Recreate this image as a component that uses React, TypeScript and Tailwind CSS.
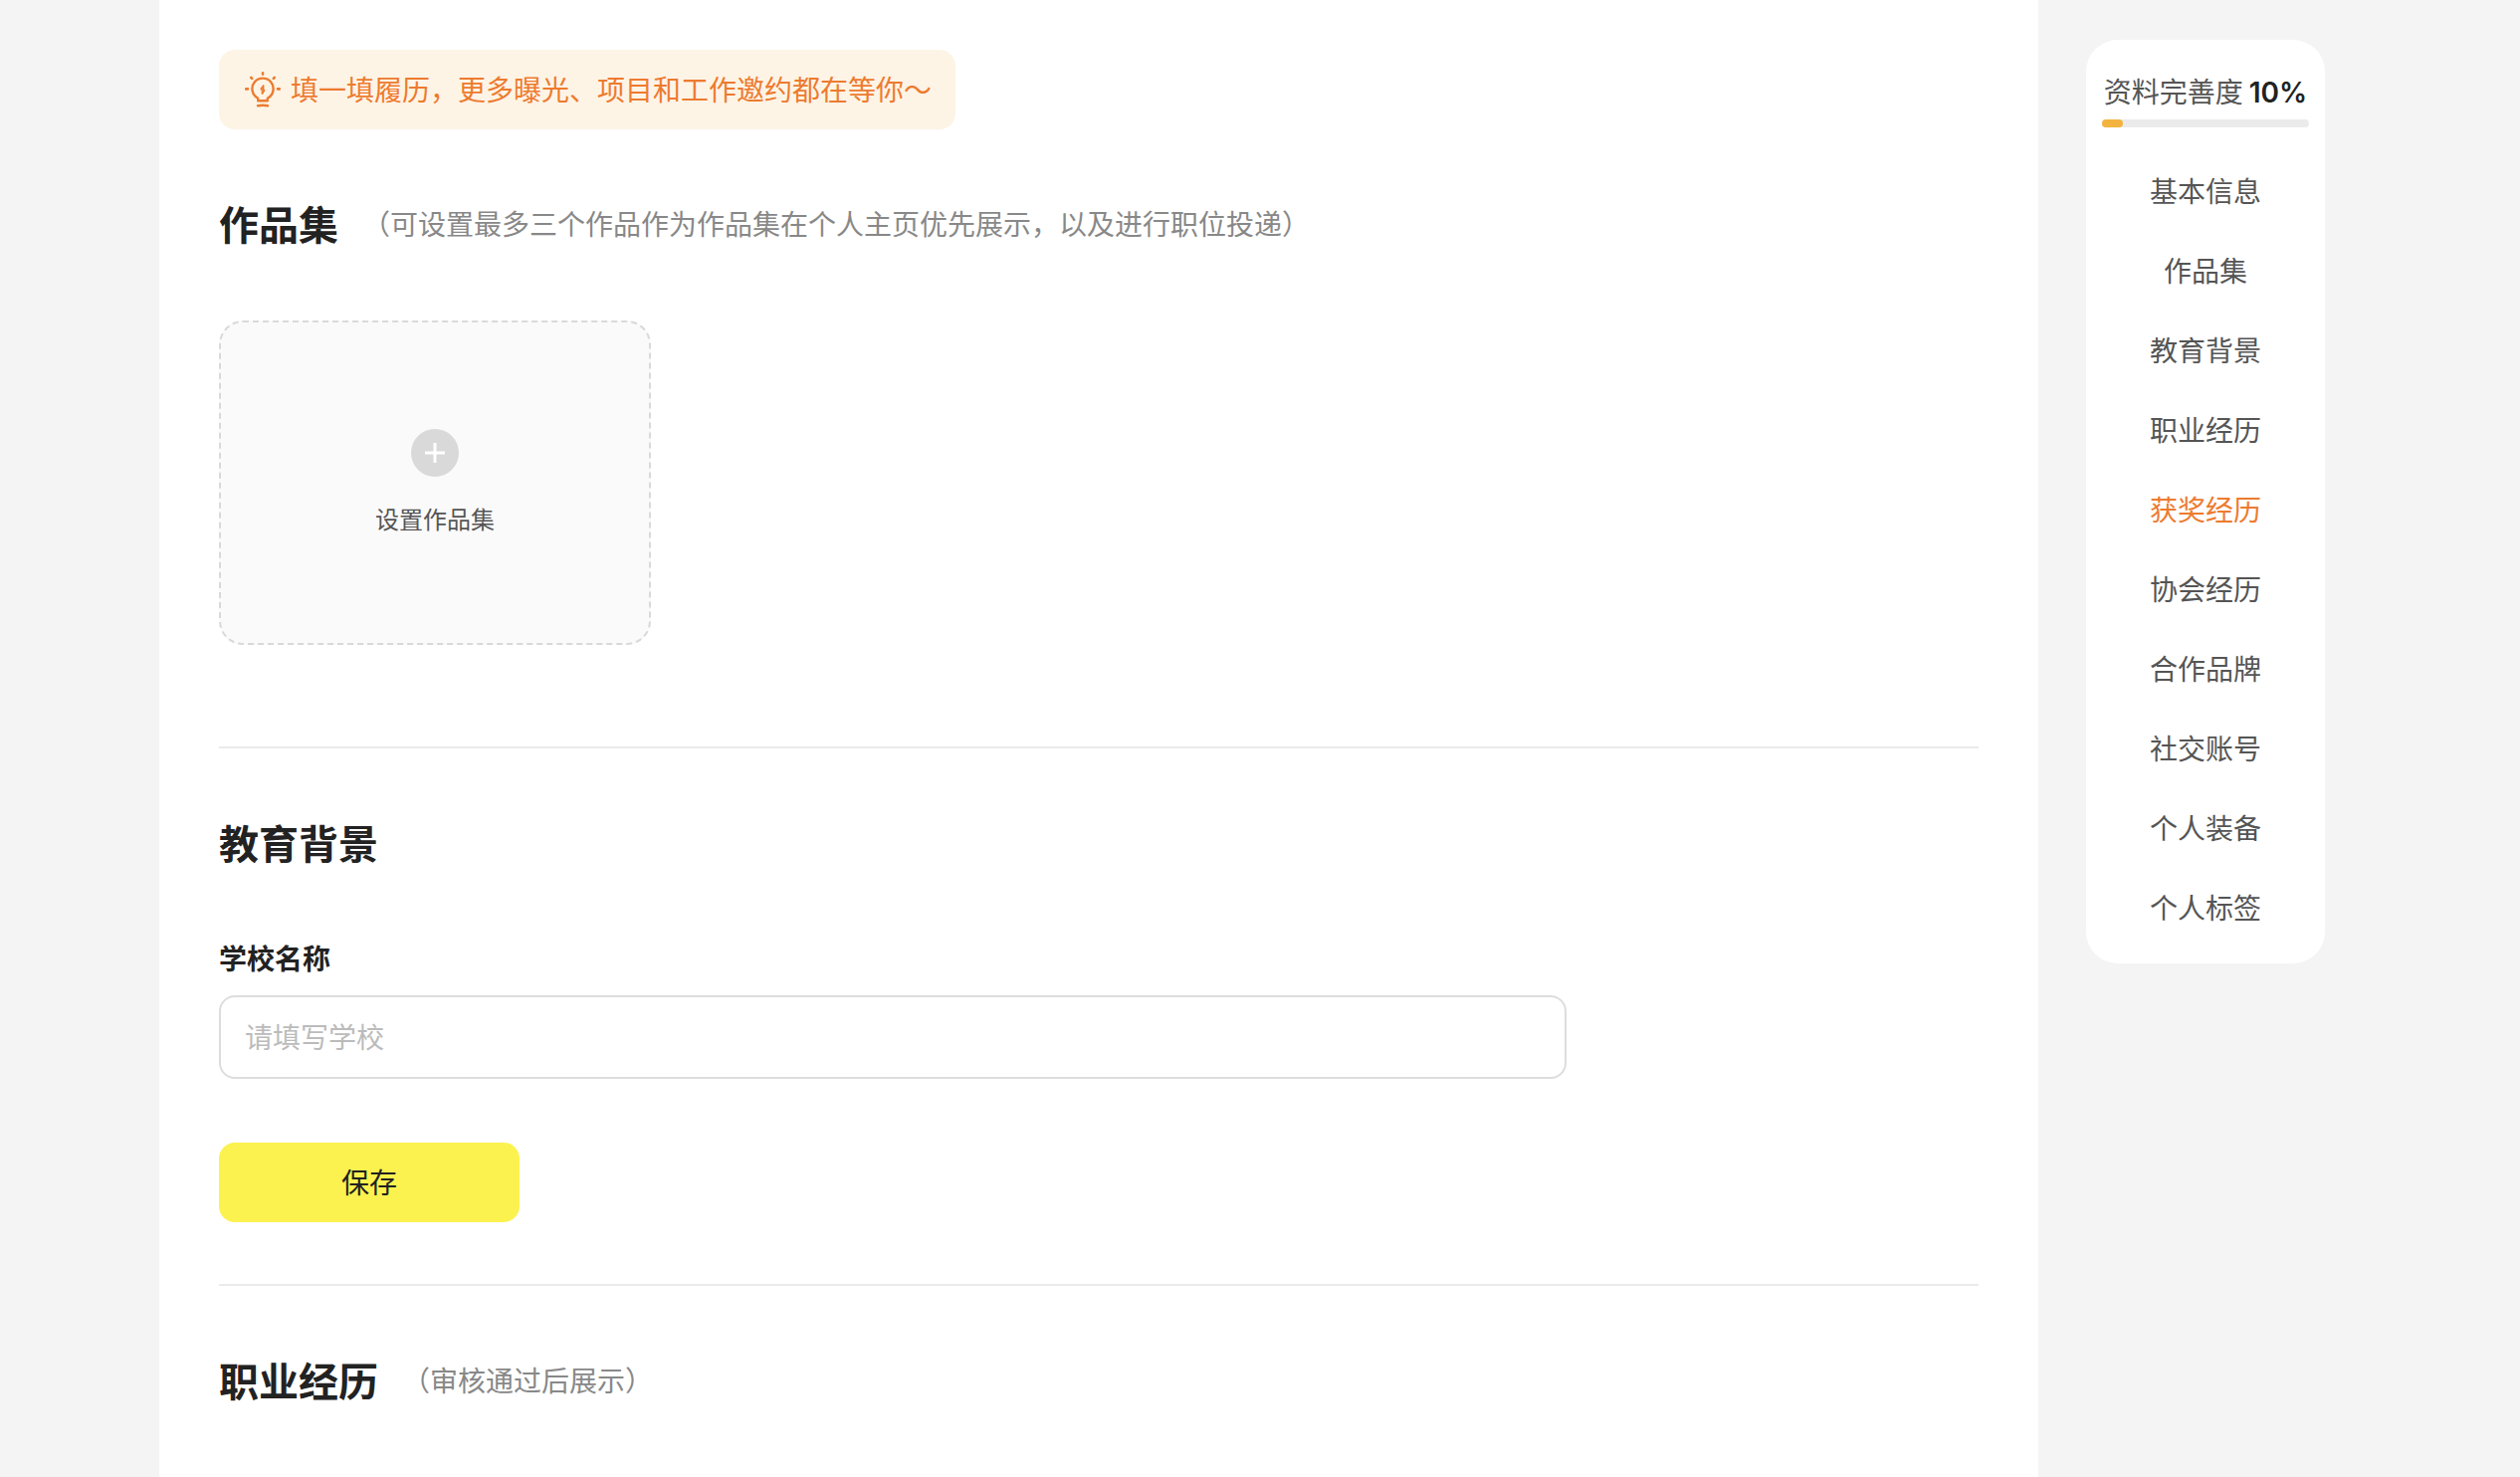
import React, { useState } from 'react';

interface NavItem {
  id: string;
  label: string;
}

const navItems: NavItem[] = [
  { id: 'basic', label: '基本信息' },
  { id: 'portfolio', label: '作品集' },
  { id: 'education', label: '教育背景' },
  { id: 'career', label: '职业经历' },
  { id: 'awards', label: '获奖经历' },
  { id: 'association', label: '协会经历' },
  { id: 'brands', label: '合作品牌' },
  { id: 'social', label: '社交账号' },
  { id: 'gear', label: '个人装备' },
  { id: 'tags', label: '个人标签' },
];

const BulbIcon: React.FC = () => (
  <svg
    className="w-10 h-10 shrink-0"
    viewBox="0 0 40 40"
    fill="none"
    stroke="currentColor"
    strokeWidth="2.4"
    strokeLinecap="round"
    strokeLinejoin="round"
    aria-hidden="true"
  >
    <path d="M15.2 31.3v-2.2q0-.4-.6-.8a10.6 10.6 0 1 1 10.8 0q-.6.4-.6.8v2.2z" />
    <path d="M15 36.3q5-1 10 0" />
    <path d="M20.6 16.2l-2.2 2.9q-.4.7.4.8l2 .3q.9.2.5 1l-1.8 2.8M20.6 16.2v2.2M19.5 24v-2.2" strokeWidth="1.7" />
    <path d="M20 3.4v1.2M3.2 19.4h1.8M35 19.4h1.8M8.2 7.8l1 1M31.8 7.8l-1 1" strokeWidth="2.6" />
  </svg>
);

interface SectionProps {
  id: string;
  title: string;
  note?: string;
  children?: React.ReactNode;
}

const Section: React.FC<SectionProps> = ({ id, title, note, children }) => (
  <section id={id} className="pt-16 pb-[62px]">
    <div className="flex items-center gap-6">
      <h2 className="text-[40px] leading-[60px] font-semibold text-[#222]">{title}</h2>
      {note && <p className="text-[28px] leading-10 text-[#888]">{note}</p>}
    </div>
    {children}
  </section>
);

const SideNav: React.FC<{ percent: number }> = ({ percent }) => {
  const [active, setActive] = useState('awards');

  return (
    <aside className="w-60 shrink-0 self-start mt-10 px-4 pt-[31px] pb-[17px] bg-white rounded-[32px]">
      <p className="flex items-baseline justify-center gap-1.5 h-10 text-[28px] leading-10 whitespace-nowrap text-[#555]">
        <span>资料完善度</span>
        <span className="font-[Inter,sans-serif] font-semibold text-[#222]">{percent}%</span>
      </p>
      <div className="mt-[9px] h-2 rounded-full bg-[#ebebeb]">
        <div className="h-full rounded-full bg-[#f3b33f]" style={{ width: `${percent}%` }} />
      </div>
      <nav className="mt-[23px]">
        {navItems.map((item) => (
          <a
            key={item.id}
            href={`#${item.id}`}
            onClick={() => setActive(item.id)}
            className={`block text-[28px] leading-20 text-center ${
              active === item.id ? 'text-[#ed7b2f]' : 'text-[#555]'
            }`}
          >
            {item.label}
          </a>
        ))}
      </nav>
    </aside>
  );
};

export default function App() {
  const [school, setSchool] = useState('');

  return (
    <div className="flex gap-12 min-h-screen pl-40 pr-[196px] bg-[#f4f4f4] font-['Noto_Sans_CJK_SC',sans-serif]">
      <main className="flex-1 min-w-0 px-15 pt-[50px] bg-white">
        <div className="flex w-fit items-center gap-2 h-20 px-6 rounded-2xl bg-[#fdf4e6] text-[#ed7b2f]">
          <BulbIcon />
          <p className="pb-0.5 text-[28px] leading-10">填一填履历，更多曝光、项目和工作邀约都在等你～</p>
        </div>

        <div className="divide-y-2 divide-[#ebebeb]">
          <Section id="portfolio" title="作品集" note="（可设置最多三个作品作为作品集在个人主页优先展示，以及进行职位投递）">
            <button
              type="button"
              className="flex flex-col items-center justify-center gap-6 w-[434px] h-[326px] mt-[68px] mb-10 border-2 border-dashed border-[#d9d9d9] rounded-3xl bg-[#fafafa]"
            >
              <span className="flex items-center justify-center w-12 h-12 rounded-full bg-[#d9d9d9]">
                <svg className="w-5 h-5" viewBox="0 0 20 20" stroke="#fff" strokeWidth="3" aria-hidden="true">
                  <path d="M10 0v20M0 10h20" />
                </svg>
              </span>
              <span className="text-2xl leading-9 text-[#555]">设置作品集</span>
            </button>
          </Section>

          <Section id="education" title="教育背景">
            <form onSubmit={(e) => e.preventDefault()}>
              <label htmlFor="school" className="block mt-[68px] text-[28px] leading-9 font-semibold text-[#222]">
                学校名称
              </label>
              <input
                id="school"
                type="text"
                value={school}
                onChange={(e) => setSchool(e.target.value)}
                placeholder="请填写学校"
                className="block w-full max-w-[1354px] h-21 mt-5 px-6 pb-0.5 border-2 border-[#ddd] rounded-2xl text-[28px] text-[#222] placeholder:text-[#bbb] outline-none focus:border-[#bbb]"
              />
              <button
                type="submit"
                className="block w-[302px] h-20 mt-16 pb-0.5 rounded-2xl bg-[#fcf24f] text-[28px] text-[#222]"
              >
                保存
              </button>
            </form>
          </Section>

          <Section id="career" title="职业经历" note="（审核通过后展示）" />
        </div>
      </main>

      <SideNav percent={10} />
    </div>
  );
}
